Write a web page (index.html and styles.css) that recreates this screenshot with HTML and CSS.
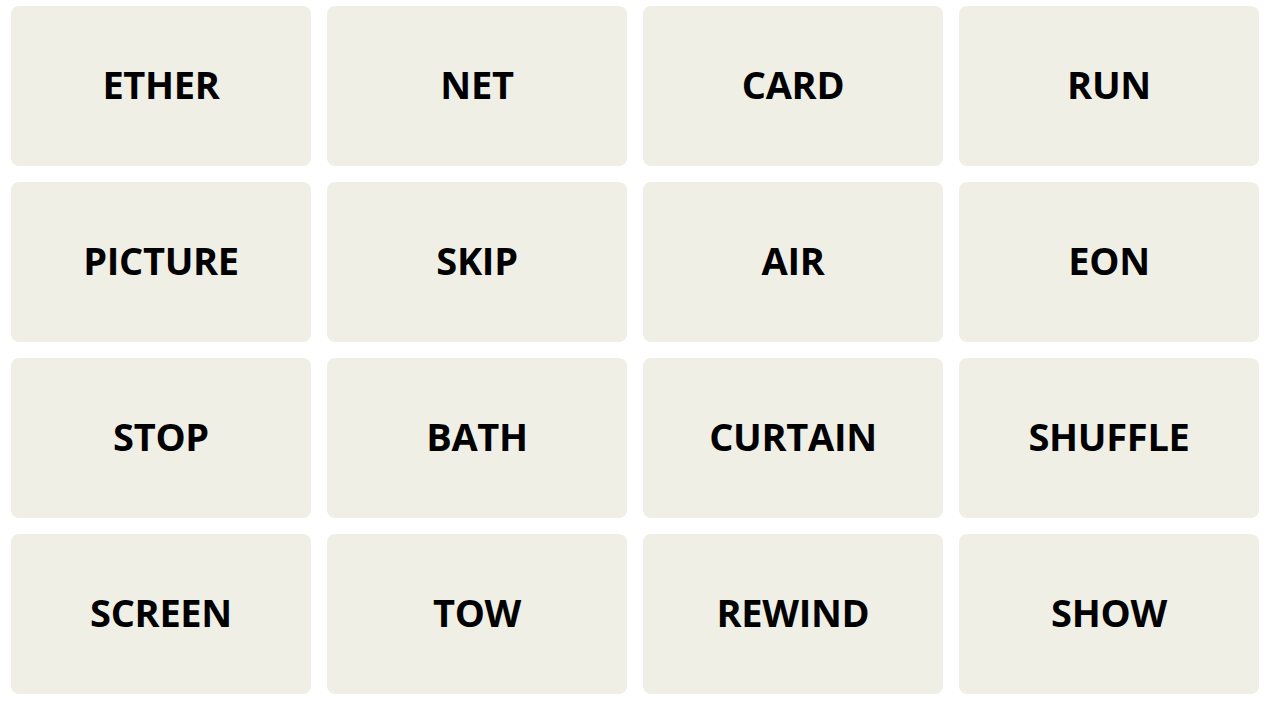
FILE: index.html
```html
<!DOCTYPE html>
<html lang="en">
<head>
  <meta charset="UTF-8" />
  <meta name="viewport" content="width=device-width, initial-scale=1.0" />
  <title>Connections</title>
  <link rel="stylesheet" href="styles.css">
</head>
<body>
  <div class="board">
    <button class="tile">ETHER</button>
    <button class="tile">NET</button>
    <button class="tile">CARD</button>
    <button class="tile">RUN</button>
    <button class="tile">PICTURE</button>
    <button class="tile">SKIP</button>
    <button class="tile">AIR</button>
    <button class="tile">EON</button>
    <button class="tile">STOP</button>
    <button class="tile">BATH</button>
    <button class="tile">CURTAIN</button>
    <button class="tile">SHUFFLE</button>
    <button class="tile">SCREEN</button>
    <button class="tile">TOW</button>
    <button class="tile">REWIND</button>
    <button class="tile">SHOW</button>
  </div>
</body>
</html>
```

FILE: styles.css
```css
body {
  margin: 0;
  padding: 6px 12px 10px 11px;
  background: #fff;
  font-family: "Open Sans", Arial, sans-serif;
}
.board {
  display: grid;
  grid-template-columns: repeat(4, 300px);
  grid-auto-rows: 160px;
  gap: 16px;
}
.tile {
  background-color: #efefe6;
  border: none;
  border-radius: 8px;
  color: #000;
  font-family: inherit;
  font-size: 38px;
  font-weight: 700;
  letter-spacing: -0.3px;
  text-transform: uppercase;
  cursor: pointer;
  padding: 0 0 4px;
}
```
